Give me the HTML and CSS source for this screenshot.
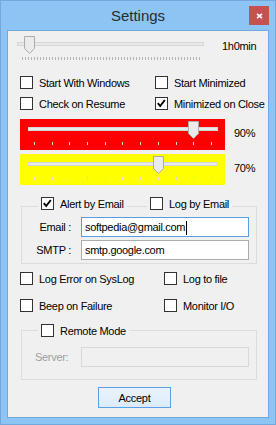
FILE: index.html
```html
<!DOCTYPE html>
<html lang="en">
<head>
    <meta charset="UTF-8">
    <title>Settings</title>
    <link rel="stylesheet" href="styles.css">
</head>
<body>
    <div class="window">
        <div class="titlebar">
            <div class="title">Settings</div>
            <div class="close">
                <svg width="7" height="6" viewBox="0 0 7 6"><path d="M1 0.8L6 5.2M6 0.8L1 5.2" stroke="#fff" stroke-width="1.7"/></svg>
            </div>
        </div>

        <div class="client">
            <!-- Check interval -->
            <div class="interval">
                <div class="slider slider-wide">
                    <div class="track"></div>
                    <div class="ticks"></div>
                    <svg class="thumb" style="left: 7px" width="11" height="18" viewBox="0 0 11 18"><path d="M0.5 0.5H10.5V12.5L5.5 17.5L0.5 12.5Z" fill="#ebebeb" stroke="#acacac"/></svg>
                </div>
                <span class="interval-value">1h0min</span>
            </div>

            <div class="options">
                <label class="check"><span class="box"></span>Start With Windows</label>
                <label class="check"><span class="box"></span>Start Minimized</label>
                <label class="check"><span class="box"></span>Check on Resume</label>
                <label class="check"><span class="box checked"><svg width="11" height="11" viewBox="0 0 11 11"><path d="M1.8 5.2L4.2 8L8.8 2" fill="none" stroke="#000" stroke-width="1.9"/></svg></span>Minimized on Close</label>
            </div>

            <!-- Threshold sliders -->
            <div class="levels">
                <div class="level-row">
                    <div class="panel red">
                        <div class="slider slider-level">
                            <div class="track"></div>
                            <div class="ticks"><span></span><span></span><span></span><span></span><span></span><span></span><span></span><span></span><span></span><span></span><span></span></div>
                            <svg class="thumb" style="left: 160px" width="11" height="18" viewBox="0 0 11 18"><path d="M0.5 0.5H10.5V12.5L5.5 17.5L0.5 12.5Z" fill="#ebebeb" stroke="#acacac"/></svg>
                        </div>
                    </div>
                    <span class="level-value">90%</span>
                </div>
                <div class="level-row">
                    <div class="panel yellow">
                        <div class="slider slider-level">
                            <div class="track"></div>
                            <div class="ticks"><span></span><span></span><span></span><span></span><span></span><span></span><span></span><span></span><span></span><span></span><span></span></div>
                            <svg class="thumb" style="left: 125px" width="11" height="18" viewBox="0 0 11 18"><path d="M0.5 0.5H10.5V12.5L5.5 17.5L0.5 12.5Z" fill="#ebebeb" stroke="#acacac"/></svg>
                        </div>
                    </div>
                    <span class="level-value">70%</span>
                </div>
            </div>

            <!-- Email group -->
            <div class="group group-email">
                <div class="group-head">
                    <label class="check"><span class="box checked"><svg width="11" height="11" viewBox="0 0 11 11"><path d="M1.8 5.2L4.2 8L8.8 2" fill="none" stroke="#000" stroke-width="1.9"/></svg></span>Alert by Email</label>
                    <label class="check"><span class="box"></span>Log by Email</label>
                </div>
                <div class="fields">
                    <span class="field-label">Email :</span>
                    <div class="field focused">softpedia@gmail.com<span class="caret"></span></div>
                    <span class="field-label">SMTP :</span>
                    <div class="field">smtp.google.com</div>
                </div>
            </div>

            <div class="options options-lower">
                <label class="check"><span class="box"></span>Log Error on SysLog</label>
                <label class="check"><span class="box"></span>Log to file</label>
                <label class="check"><span class="box"></span>Beep on Failure</label>
                <label class="check"><span class="box"></span>Monitor I/O</label>
            </div>

            <!-- Remote group -->
            <div class="group group-remote">
                <div class="group-head">
                    <label class="check"><span class="box"></span>Remote Mode</label>
                </div>
                <div class="server-row">
                    <span class="server-label">Server:</span>
                    <div class="field disabled"></div>
                </div>
            </div>

            <button class="accept">Accept</button>
        </div>
    </div>
</body>
</html>
```

FILE: styles.css
```css
* {
    box-sizing: border-box;
}
body {
    margin: 0;
    font-family: "Liberation Sans", Arial, sans-serif;
    font-size: 11px;
    letter-spacing: -0.3px;
    color: #000;
}
.window {
    width: 276px;
    height: 425px;
    background: #8cc4f4;
    border: 1px solid #72a9dc;
    display: flex;
    flex-direction: column;
}
.titlebar {
    height: 29px;
    display: grid;
    grid-template-columns: 1fr auto 1fr;
    align-items: start;
}
.title {
    grid-column: 2;
    font-size: 15px;
    letter-spacing: 0;
    line-height: 29px;
    color: #2b2b2b;
}
.close {
    grid-column: 3;
    justify-self: end;
    margin: 5px 6px 0 0;
    width: 20px;
    height: 19px;
    background: #c75050;
    display: flex;
    align-items: center;
    justify-content: center;
}
.client {
    height: 388px;
    margin: 0 6px;
    border: 1px solid #72a9dc;
    background: #f0f0f0;
}

/* sliders */
.slider {
    position: relative;
}
.track {
    height: 4px;
    border: 1px solid #d6d6d6;
    background: #e7eaea;
}
.ticks {
    height: 3px;
}
.thumb {
    position: absolute;
    top: -6px;
}
.interval {
    display: flex;
    align-items: flex-start;
}
.slider-wide {
    width: 187px;
    margin: 11px 0 0 9px;
}
.slider-wide .ticks {
    width: 178px;
    margin: 11px 0 0 5px;
    background: repeating-linear-gradient(to right, #b4b4b4 0 1px, transparent 1px 3px);
}
.interval-value {
    margin: 9px 0 0 18px;
    line-height: 13px;
}

/* checkboxes */
.check {
    display: flex;
    align-items: center;
    gap: 6px;
    height: 13px;
    white-space: nowrap;
}
.box {
    flex: none;
    width: 13px;
    height: 13px;
    border: 1px solid #333;
    background: #fff;
}
.box svg {
    display: block;
}
.options {
    display: grid;
    grid-template-columns: 135px auto;
    row-gap: 8px;
    margin: 16px 0 0 12px;
}
.options-lower {
    grid-template-columns: 144px auto;
    row-gap: 14px;
    margin-top: 8px;
}

/* threshold panels */
.levels {
    display: flex;
    flex-direction: column;
    gap: 4px;
    margin: 9px 0 0 12px;
}
.level-row {
    display: flex;
    align-items: center;
    gap: 9px;
}
.panel {
    width: 205px;
    height: 31px;
    padding: 8px 0 0 8px;
}
.red {
    background: #ff0000;
}
.yellow {
    background: #ffff00;
}
.slider-level {
    width: 190px;
}
.slider-level .ticks {
    width: 178px;
    margin: 11px 0 0 6px;
    display: flex;
    justify-content: space-between;
}
.slider-level .ticks span {
    width: 1px;
    height: 3px;
    background: #d8d8d8;
}
.level-value {
    margin-bottom: 3px;
}

/* group boxes */
.group {
    width: 236px;
    margin-left: 13px;
    border: 1px solid #dcdcdc;
}
.group-email {
    margin-top: 21px;
}
.group-remote {
    margin-top: 18px;
}
.group-head {
    display: grid;
    grid-template-columns: 109px auto;
    padding-left: 16px;
    margin-top: -10px;
}
.group-remote .group-head {
    margin-top: -7px;
}
.group-head .check {
    justify-self: start;
    padding: 0 3px;
    background: #f0f0f0;
}
.fields {
    display: grid;
    grid-template-columns: 53px 168px;
    column-gap: 6px;
    row-gap: 3px;
    padding: 7px 0 3px;
}
.field-label {
    text-align: right;
    padding-right: 4px;
    line-height: 20px;
}
.field {
    height: 20px;
    border: 1px solid #abadb3;
    background: #fff;
    padding: 0 3px;
    line-height: 18px;
    white-space: nowrap;
}
.field.focused {
    border-color: #569de5;
}
.field.disabled {
    border-color: #d9d9d9;
    background: #f0f0f0;
}
.caret {
    display: inline-block;
    width: 1px;
    height: 14px;
    margin-left: 1px;
    background: #000;
    vertical-align: middle;
}
.server-row {
    display: grid;
    grid-template-columns: 46px 168px;
    padding: 10px 0 12px 13px;
}
.server-label {
    color: #9e9e9e;
    line-height: 20px;
}
.accept {
    display: block;
    width: 73px;
    height: 21px;
    margin: 7px 0 0 90px;
    padding: 0;
    font-family: inherit;
    font-size: 11px;
    letter-spacing: -0.3px;
    color: #000;
    border: 1px solid #5ba0e4;
    border-radius: 0;
    background: linear-gradient(#eaf3fc, #dcebfb);
}
```
